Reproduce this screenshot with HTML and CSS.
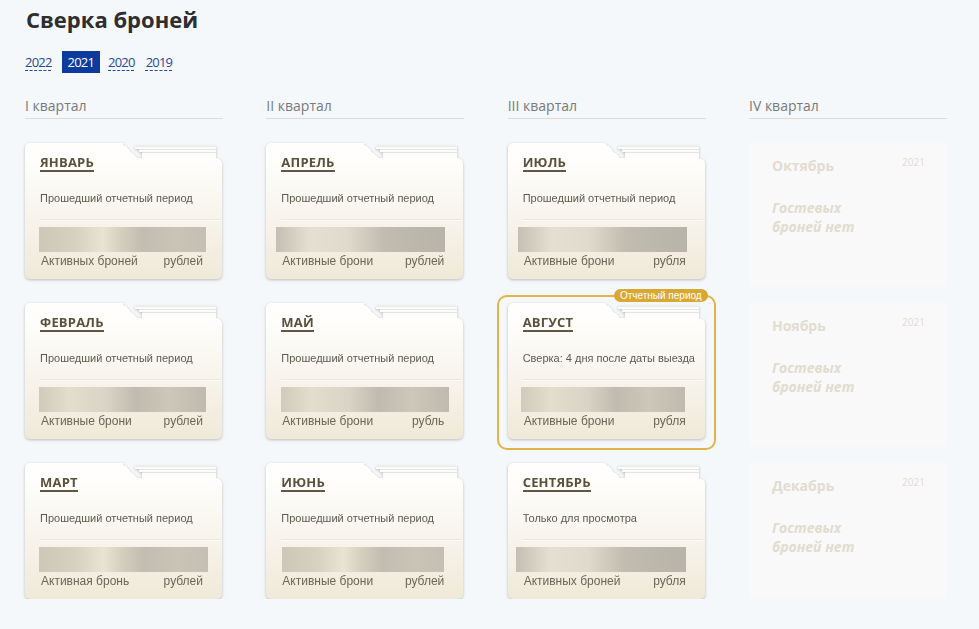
FILE: index.html
```html
<!DOCTYPE html>
<html lang="ru">
<head>
<meta charset="utf-8">
<title>Сверка броней</title>
<link rel="stylesheet" href="styles.css">
</head>
<body>
<h1 class="page-title">Сверка броней</h1>
<nav class="years">
  <a class="year"><span>2022</span></a>
  <a class="year active"><span>2021</span></a>
  <a class="year tight"><span>2020</span></a>
  <a class="year"><span>2019</span></a>
</nav>

<div class="quarters">
  <section class="quarter">
    <h2 class="q-title">I квартал</h2>
    <div class="folder">
      <div class="folder-top"><span class="tab"></span><span class="slope"></span><span class="stack"></span></div>
      <div class="folder-body">
        <div class="month"><span>ЯНВАРЬ</span></div>
        <p class="status">Прошедший отчетный период</p>
        <div class="sep"></div>
        <div class="blur b1" style="margin-left:-1px;width:167px"></div>
        <div class="totals"><span>Активных броней</span><span>рублей</span></div>
      </div>
    </div>
    <div class="folder">
      <div class="folder-top"><span class="tab"></span><span class="slope"></span><span class="stack"></span></div>
      <div class="folder-body">
        <div class="month"><span>ФЕВРАЛЬ</span></div>
        <p class="status">Прошедший отчетный период</p>
        <div class="sep"></div>
        <div class="blur b2" style="margin-left:-1px;width:167px"></div>
        <div class="totals"><span>Активные брони</span><span>рублей</span></div>
      </div>
    </div>
    <div class="folder">
      <div class="folder-top"><span class="tab"></span><span class="slope"></span><span class="stack"></span></div>
      <div class="folder-body">
        <div class="month"><span>МАРТ</span></div>
        <p class="status">Прошедший отчетный период</p>
        <div class="sep"></div>
        <div class="blur b1" style="margin-left:-1px;width:169px"></div>
        <div class="totals"><span>Активная бронь</span><span>рублей</span></div>
      </div>
    </div>
  </section>

  <section class="quarter">
    <h2 class="q-title">II квартал</h2>
    <div class="folder">
      <div class="folder-top"><span class="tab"></span><span class="slope"></span><span class="stack"></span></div>
      <div class="folder-body">
        <div class="month"><span>АПРЕЛЬ</span></div>
        <p class="status">Прошедший отчетный период</p>
        <div class="sep"></div>
        <div class="blur b3" style="margin-left:-5px;width:169px"></div>
        <div class="totals"><span>Активные брони</span><span>рублей</span></div>
      </div>
    </div>
    <div class="folder">
      <div class="folder-top"><span class="tab"></span><span class="slope"></span><span class="stack"></span></div>
      <div class="folder-body">
        <div class="month"><span>МАЙ</span></div>
        <p class="status">Прошедший отчетный период</p>
        <div class="sep"></div>
        <div class="blur b2" style="margin-left:0;width:168px"></div>
        <div class="totals"><span>Активные брони</span><span>рубль</span></div>
      </div>
    </div>
    <div class="folder">
      <div class="folder-top"><span class="tab"></span><span class="slope"></span><span class="stack"></span></div>
      <div class="folder-body">
        <div class="month"><span>ИЮНЬ</span></div>
        <p class="status">Прошедший отчетный период</p>
        <div class="sep"></div>
        <div class="blur b1" style="margin-left:1px;width:162px"></div>
        <div class="totals"><span>Активные брони</span><span>рублей</span></div>
      </div>
    </div>
  </section>

  <section class="quarter">
    <h2 class="q-title">III квартал</h2>
    <div class="folder">
      <div class="folder-top"><span class="tab"></span><span class="slope"></span><span class="stack"></span></div>
      <div class="folder-body">
        <div class="month"><span>ИЮЛЬ</span></div>
        <p class="status">Прошедший отчетный период</p>
        <div class="sep"></div>
        <div class="blur b3" style="margin-left:-5px;width:169px"></div>
        <div class="totals"><span>Активные брони</span><span>рубля</span></div>
      </div>
    </div>
    <div class="slot current">
      <span class="badge">Отчетный период</span>
      <div class="folder">
        <div class="folder-top"><span class="tab"></span><span class="slope"></span><span class="stack"></span></div>
        <div class="folder-body">
          <div class="month"><span>АВГУСТ</span></div>
          <p class="status">Сверка: 4 дня после даты выезда</p>
          <div class="sep"></div>
          <div class="blur b2" style="margin-left:-2px;width:164px"></div>
          <div class="totals"><span>Активные брони</span><span>рубля</span></div>
        </div>
      </div>
    </div>
    <div class="folder">
      <div class="folder-top"><span class="tab"></span><span class="slope"></span><span class="stack"></span></div>
      <div class="folder-body">
        <div class="month"><span>СЕНТЯБРЬ</span></div>
        <p class="status">Только для просмотра</p>
        <div class="sep"></div>
        <div class="blur b3" style="margin-left:-7px;width:170px"></div>
        <div class="totals"><span>Активных броней</span><span>рубля</span></div>
      </div>
    </div>
  </section>

  <section class="quarter">
    <h2 class="q-title">IV квартал</h2>
    <div class="empty">
      <div class="empty-head"><span class="empty-month">Октябрь</span><span class="empty-year">2021</span></div>
      <p class="empty-note">Гостевых<br>броней нет</p>
    </div>
    <div class="empty">
      <div class="empty-head"><span class="empty-month">Ноябрь</span><span class="empty-year">2021</span></div>
      <p class="empty-note">Гостевых<br>броней нет</p>
    </div>
    <div class="empty">
      <div class="empty-head"><span class="empty-month">Декабрь</span><span class="empty-year">2021</span></div>
      <p class="empty-note">Гостевых<br>броней нет</p>
    </div>
  </section>
</div>
</body>
</html>
```

FILE: styles.css
```css
* { box-sizing: border-box; }

body {
  margin: 0;
  padding: 4px 25px 0;
  background: #f4f8fb;
  font-family: "Open Sans", "Noto Sans", sans-serif;
}

.page-title {
  margin: 0 0 0 1px;
  font-size: 22px;
  line-height: 30px;
  font-weight: 700;
  color: #2e2e2e;
}

.years {
  display: flex;
  margin: 17px 0 0 -6px;
}

.year {
  padding: 0 6px;
  margin-right: 4px;
  font-size: 13px;
  line-height: 22px;
  letter-spacing: -0.8px;
  color: #274a94;
}

.year.tight { margin-right: -1px; }

.year span {
  text-decoration: underline dashed #274a94;
  text-underline-offset: 3px;
  text-decoration-thickness: 1px;
}

.year.active {
  background: #0c3a9d;
  color: #fff;
  margin-right: 2px;
}

.year.active span { text-decoration: none; }

.quarters {
  display: grid;
  grid-template-columns: repeat(4, 198px);
  column-gap: 43.33px;
  margin-top: 23px;
}

.quarter {
  display: flex;
  flex-direction: column;
  gap: 24px;
}

.q-title {
  margin: 0;
  font-size: 14px;
  line-height: 20px;
  font-weight: 400;
  color: #7a7a7a;
  padding-bottom: 2px;
  border-bottom: 1px solid #dedbd3;
}

/* folder card */
.folder {
  width: 197px;
  height: 136px;
  display: flex;
  flex-direction: column;
  filter: drop-shadow(0 1px 1.5px rgba(60, 50, 30, 0.3));
}

.folder-top {
  display: flex;
  height: 15px;
}

.tab {
  width: 97px;
  background: #fffefc;
  border-radius: 5px 0 0 0;
}

.slope {
  width: 15px;
  background: linear-gradient(to top right, #fffefc 50%, transparent 50%);
}

.stack {
  flex: 1;
  margin: 0 6px 0 -6px;
  background:
    linear-gradient(#ebebe8, #ebebe8) 4px 3px / 100% 1px no-repeat,
    linear-gradient(#fbfbfa, #fbfbfa) 4px 4px / 100% 2px no-repeat,
    linear-gradient(#e6e6e3, #e6e6e3) 8px 6px / 100% 1px no-repeat,
    linear-gradient(#fbfbfa, #fbfbfa) 8px 7px / 100% 2px no-repeat,
    linear-gradient(#e4e4e1, #e4e4e1) 11px 9px / 100% 1px no-repeat,
    linear-gradient(#fcfcfb, #fcfcfb) 11px 10px / 100% 5px no-repeat;
}

.folder-body {
  flex: 1;
  background: linear-gradient(to bottom, #fffefc 0%, #f8f5ee 45%, #efe9d8 100%);
  border-radius: 0 6px 5px 5px;
  padding: 0 19px 11px 15px;
  display: flex;
  flex-direction: column;
  align-items: flex-start;
}

.month {
  margin-top: -4px;
  font-size: 13px;
  line-height: 16px;
  font-weight: 700;
  color: #5b503c;
  letter-spacing: 0.2px;
}

.month span {
  display: inline-block;
  border-bottom: 2px solid #625642;
}

.status {
  margin: 19px 0 0;
  font-family: "Liberation Sans", Arial, sans-serif;
  font-size: 11px;
  line-height: 14px;
  color: #5f594d;
  white-space: nowrap;
}

.sep {
  align-self: stretch;
  margin: 14px -17px 0 0;
  height: 1px;
  background: #ebe6d9;
  box-shadow: 0 1px 0 rgba(255, 255, 255, 0.8);
}

.blur {
  margin-top: 7px;
  height: 25px;
  filter: blur(0.7px);
}

.b1 {
  background: linear-gradient(90deg, #ccc7b7 0%, #d6d1c1 22%, #e8e3d3 38%, #d3cdbd 50%, #c2bdb0 62%, #c9c4b6 82%, #c3bfb2 100%);
}

.b2 {
  background: linear-gradient(90deg, #cfcaba 0%, #e2ddcd 18%, #d9d4c5 40%, #c0bbae 58%, #ccc7b9 78%, #bfbaad 100%);
}

.b3 {
  background: linear-gradient(90deg, #c4bfb2 0%, #e4dfd0 20%, #dfdacb 42%, #c1bcaf 64%, #bbb7ab 85%, #b8b4a9 100%);
}

.totals {
  align-self: stretch;
  margin: 2px 0 0 1px;
  display: flex;
  justify-content: space-between;
  font-family: "Liberation Sans", Arial, sans-serif;
  font-size: 12px;
  line-height: 14px;
  color: #6c665a;
}

/* current period */
.slot { position: relative; }

.slot.current::before {
  content: "";
  position: absolute;
  top: -8px;
  left: -11px;
  right: -10px;
  bottom: -11px;
  border: 2px solid #e2b348;
  border-radius: 10px;
  pointer-events: none;
}

.badge {
  position: absolute;
  top: -14px;
  right: -2px;
  z-index: 2;
  height: 13px;
  padding: 0 6px;
  border-radius: 7px;
  background: #d9a833;
  color: #fff;
  font-family: "Liberation Sans", Arial, sans-serif;
  font-size: 10px;
  line-height: 13px;
  white-space: nowrap;
}

/* empty quarter */
.empty {
  height: 144px;
  margin-bottom: -8px;
  background: #f9f9f9;
  border-radius: 3px;
  padding: 14px 22px 0 23px;
}

.empty-head {
  display: flex;
  justify-content: space-between;
  align-items: flex-start;
}

.empty-month {
  font-size: 14px;
  line-height: 18px;
  font-weight: 700;
  color: #e1ddd1;
}

.empty-year {
  margin-top: -2px;
  font-size: 10px;
  line-height: 14px;
  color: #e1dccf;
}

.empty-note {
  margin: 23px 0 0;
  font-size: 14px;
  line-height: 19px;
  font-weight: 700;
  font-style: italic;
  color: #e1dccf;
}
```
